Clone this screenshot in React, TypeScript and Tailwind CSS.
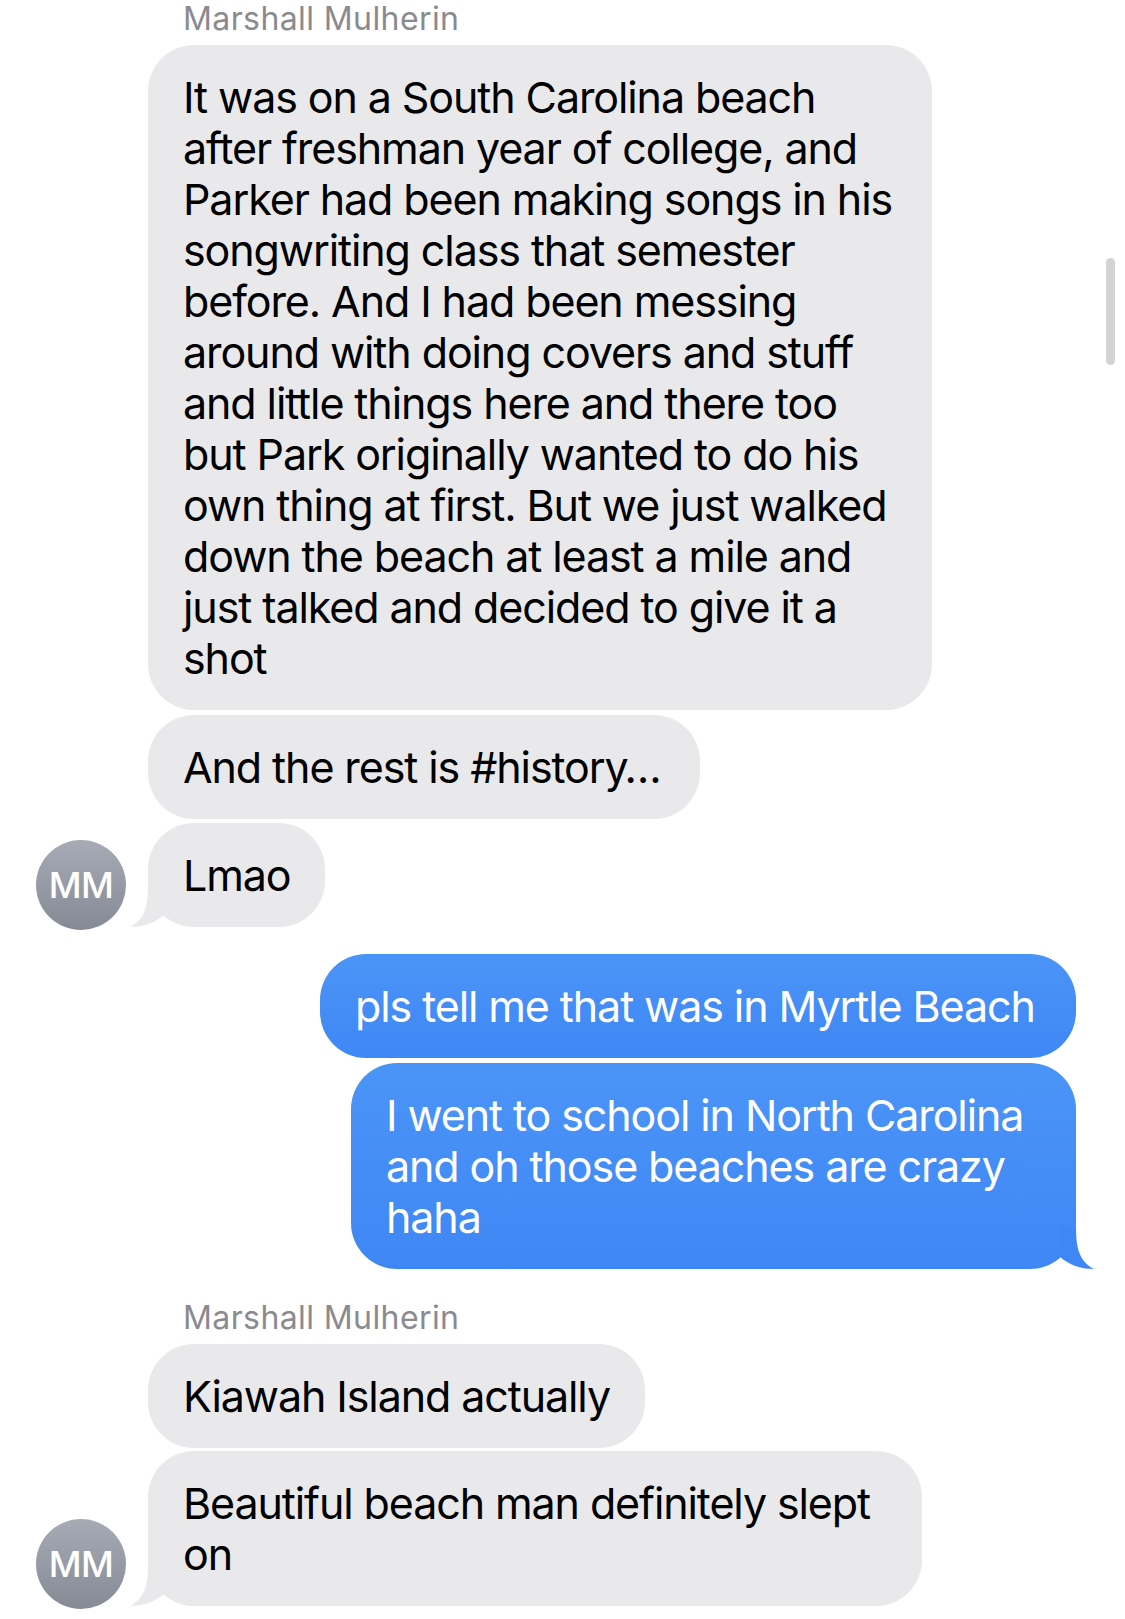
import React from "react";

const FONT = { fontFamily: 'Inter, "Noto Sans", sans-serif' };

function Avatar() {
  return (
    <div className="w-[90px] h-[90px] rounded-full bg-gradient-to-b from-[#a7abb6] to-[#868a95] flex items-center justify-center text-white text-[36px] font-medium tracking-[-0.5px] mb-[-3px]">
      MM
    </div>
  );
}

function GreyTail() {
  return (
    <svg className="absolute left-[-18px] bottom-0" width="40" height="45" viewBox="0 0 40 45">
      <path d="M18 2 C18 24 15 37 0 45 C12 45 24 42 35 32 L35 2 Z" fill="#e9e9eb" />
    </svg>
  );
}

function BlueTail() {
  return (
    <svg className="absolute right-[-18px] bottom-0" width="40" height="45" viewBox="0 0 40 45">
      <path d="M22 2 C22 24 25 37 40 45 C28 45 16 42 5 32 L5 2 Z" fill="#3f87f5" />
    </svg>
  );
}

function Grey({ lines, w, tail }: { lines: string[]; w: string; tail?: boolean }) {
  return (
    <div className={`relative ${w} bg-[#e9e9eb] rounded-[46px] px-[35px] py-[26.5px] text-black text-[43px] leading-[51px] tracking-[-1.1px]`}>
      {lines.map((l, i) => (
        <div key={i} className="whitespace-nowrap">{l}</div>
      ))}
      {tail && <GreyTail />}
    </div>
  );
}

function Blue({ lines, w, tail }: { lines: string[]; w: string; tail?: boolean }) {
  return (
    <div className={`relative ${w} bg-gradient-to-b from-[#4b94f7] to-[#3f87f5] rounded-[46px] px-[35px] py-[26.5px] text-white text-[43px] leading-[51px] tracking-[-1.1px]`}>
      {lines.map((l, i) => (
        <div key={i} className="whitespace-nowrap">{l}</div>
      ))}
      {tail && <BlueTail />}
    </div>
  );
}

function Row({ avatar, children }: { avatar?: boolean; children: React.ReactNode }) {
  return (
    <div className="flex items-end pl-[36px] gap-[22px]">
      <div className="w-[90px] shrink-0">{avatar && <Avatar />}</div>
      {children}
    </div>
  );
}

function Name() {
  return (
    <div className="pl-[183px] text-[32px] leading-[38px] text-[#8a8a8f] tracking-[0.4px]">Marshall Mulherin</div>
  );
}

export default function App() {
  return (
    <div className="relative w-[1125px] h-[1619px] bg-white overflow-hidden" style={FONT}>
      <div className="flex flex-col">
        <Name />
        <div className="h-[7px]" />
        <Row>
          <Grey
            w="w-[784px]"
            lines={[
              "It was on a South Carolina beach",
              "after freshman year of college, and",
              "Parker had been making songs in his",
              "songwriting class that semester",
              "before. And I had been messing",
              "around with doing covers and stuff",
              "and little things here and there too",
              "but Park originally wanted to do his",
              "own thing at first. But we just walked",
              "down the beach at least a mile and",
              "just talked and decided to give it a",
              "shot",
            ]}
          />
        </Row>
        <div className="h-[5px]" />
        <Row>
          <Grey w="w-[552px]" lines={["And the rest is #history…"]} />
        </Row>
        <div className="h-[4px]" />
        <Row avatar>
          <Grey w="w-[177px]" lines={["Lmao"]} tail />
        </Row>
        <div className="h-[27px]" />
        <div className="flex justify-end pr-[49px]">
          <Blue w="w-[756px]" lines={["pls tell me that was in Myrtle Beach"]} />
        </div>
        <div className="h-[5px]" />
        <div className="flex justify-end pr-[49px]">
          <Blue
            w="w-[725px]"
            lines={["I went to school in North Carolina", "and oh those beaches are crazy", "haha"]}
            tail
          />
        </div>
        <div className="h-[30px]" />
        <Name />
        <div className="h-[7px]" />
        <Row>
          <Grey w="w-[497px]" lines={["Kiawah Island actually"]} />
        </Row>
        <div className="h-[3px]" />
        <Row avatar>
          <Grey w="w-[774px]" lines={["Beautiful beach man definitely slept", "on"]} tail />
        </Row>
      </div>
      <div className="absolute left-[1106px] top-[258px] w-[9px] h-[107px] rounded-full bg-[#d3d3d3]" />
    </div>
  );
}
